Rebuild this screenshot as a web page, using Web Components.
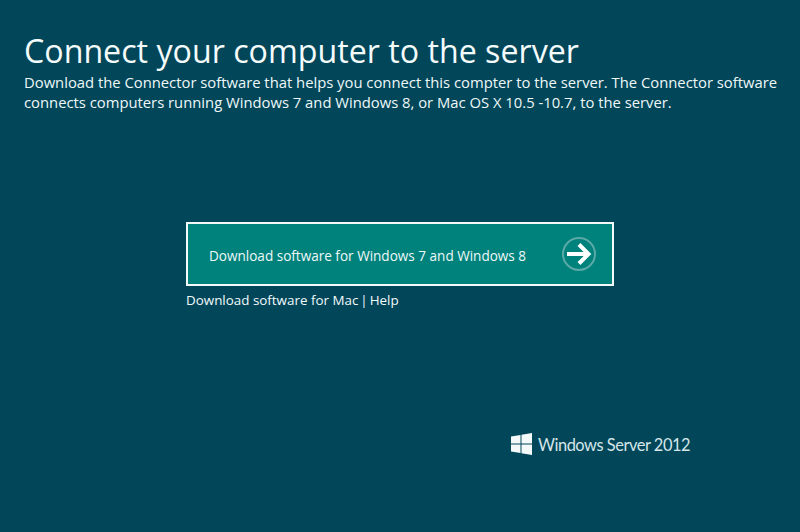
<!DOCTYPE html>
<html>
<head>
<meta charset="utf-8">
<title>Connect your computer to the server</title>
<style>
  html, body { margin: 0; height: 100%; }
  body { background: #02465a; font-family: "Open Sans", "Noto Sans", sans-serif; color: #fff; }
</style>
</head>
<body>
<connect-page>
  <page-header slot="header" title-text="Connect your computer to the server">Download the Connector software that helps you connect this compter to the server. The Connector software connects computers running Windows 7 and Windows 8, or Mac OS X 10.5 -10.7, to the server.</page-header>
  <download-panel slot="main" label="Download software for Windows 7 and Windows 8"></download-panel>
  <server-logo slot="footer"></server-logo>
</connect-page>

<script>
class ConnectPage extends HTMLElement {
    constructor() {
        super();
        this.attachShadow({ mode: 'open' });
    }
    connectedCallback() {
        this.shadowRoot.innerHTML = `
      <style>
        :host { display: flex; flex-direction: column; width: 800px; height: 532px; box-sizing: border-box; padding: 30px 0 0 24px; overflow: hidden; }
        .main { margin: 110px 0 0 162px; }
        .footer { margin: 123px 0 0 487px; }
      </style>
      <slot name="header"></slot>
      <div class="main"><slot name="main"></slot></div>
      <div class="footer"><slot name="footer"></slot></div>
    `;
    }
}

class PageHeader extends HTMLElement {
    constructor() {
        super();
        this.attachShadow({ mode: 'open' });
    }
    connectedCallback() {
        this.shadowRoot.innerHTML = `
      <style>
        :host { display: block; }
        h1 { margin: 0; font-size: 32.2px; line-height: 42px; font-weight: 400; color: #f4fbfb; }
        p { margin: 0; width: 770px; font-size: 14.8px; line-height: 20px; color: #eef8f8; }
      </style>
      <h1>${this.getAttribute('title-text')}</h1>
      <p><slot></slot></p>
    `;
    }
}

class DownloadPanel extends HTMLElement {
    constructor() {
        super();
        this.attachShadow({ mode: 'open' });
    }
    connectedCallback() {
        this.shadowRoot.innerHTML = `
      <style>
        :host { display: block; width: 428px; }
        .button { display: flex; align-items: center; justify-content: space-between; box-sizing: border-box; height: 64px; padding: 0 16px 0 21px; background: #00827c; border: 2px solid #f2fafa; font-size: 13.55px; color: #eef8f8; }
        .button span { padding-top: 3px; }
        svg { display: block; }
        .links { margin-top: 4px; font-size: 13.4px; line-height: 20px; color: #f2fafa; }
        .sep { margin: 0 -1.5px; }
      </style>
      <div class="button">
        <span>${this.getAttribute('label')}</span>
        <svg width="34" height="34" viewBox="0 0 34 34" fill="none">
          <circle cx="17" cy="17" r="16" stroke="#5aa9a6" stroke-width="2"/>
          <path d="M5 17H26M17 7.5L26.5 17L17 26.5" stroke="#fff" stroke-width="4"/>
        </svg>
      </div>
      <div class="links">Download software for Mac <span class="sep">|</span> Help</div>
    `;
    }
}

class ServerLogo extends HTMLElement {
    constructor() {
        super();
        this.attachShadow({ mode: 'open' });
    }
    connectedCallback() {
        this.shadowRoot.innerHTML = `
      <style>
        :host { display: flex; align-items: center; gap: 6px; color: #d5e6e9; font-family: Lato, "Open Sans", sans-serif; font-size: 16.4px; letter-spacing: -0.45px; }
        svg { display: block; }
      </style>
      <svg width="21" height="22" viewBox="0 0 21 22" fill="#f4fafa">
        <path d="M0 3.5L9.5 2v8.5H0zM10.5 1.8L21 0v10.5H10.5zM0 11.5h9.5V20L0 18.5zM10.5 11.5H21V22l-10.5-1.8z"/>
      </svg>
      <span>Windows Server 2012</span>
    `;
    }
}

customElements.define('connect-page', ConnectPage);
customElements.define('page-header', PageHeader);
customElements.define('download-panel', DownloadPanel);
customElements.define('server-logo', ServerLogo);
</script>
</body>
</html>
